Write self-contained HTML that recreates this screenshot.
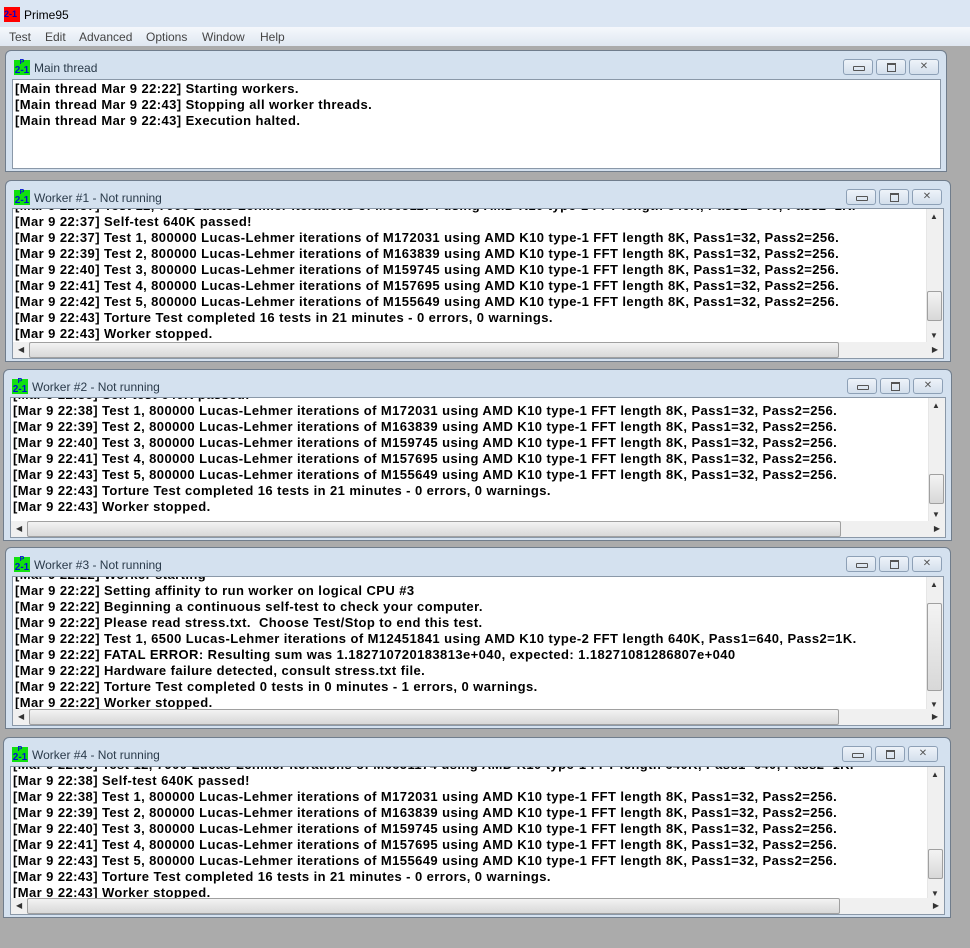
<!DOCTYPE html><html><head><style>
body{margin:0;width:970px;height:948px;background:#ababab;position:relative;overflow:hidden;font-family:"Liberation Sans",sans-serif}
.top{position:absolute;left:0;top:0;width:970px;height:46px;background:#dbe6f3}
.cap{position:absolute;left:24px;top:8px;font-size:12px;color:#000}
.menu{position:absolute;left:0;top:27px;width:970px;height:19px;background:linear-gradient(#f5f8fc,#dfe7f1);font-size:12px;color:#444}
.menu span{position:absolute;top:3px}
.win{position:absolute;background:#d4e1ef;border:1px solid #707d8c;border-radius:6px 6px 0 0;box-sizing:border-box}
.ic{position:absolute;left:8px;top:9px;width:16px;height:15px;background:#10e010;color:#0010d0;font-size:10px;font-weight:bold;line-height:9px;text-align:center}
.ic b{display:block;font-size:7px;line-height:6px}
.tt{position:absolute;left:28px;top:10px;font-size:12px;color:#2a3a4a}
.btn{position:absolute;top:8px;width:30px;height:16px;border:1px solid #8da0b6;border-radius:3px;background:linear-gradient(#eef3f9,#d3dfec);box-sizing:border-box;font-size:10px;color:#555;text-align:center;line-height:13px}
.b1::after{content:"";position:absolute;left:9px;top:6px;width:10px;height:3px;border:1px solid #555;border-radius:1px}
.b2::after{content:"";position:absolute;left:10px;top:3px;width:7px;height:6px;border:1px solid #555;border-top-width:2px}
.cl{position:absolute;background:#fff;border:1px solid #8a98a8;overflow:hidden;box-sizing:border-box}
.tx{position:absolute;left:2px;font-size:13px;letter-spacing:0.42px;font-weight:bold;line-height:16px;white-space:pre;color:#000}
.vs{position:absolute;right:0;top:0;width:16px;background:#f0f0f0;border-left:1px solid #e6e6e6;font-size:8px;color:#333;text-align:center}
.hs{position:absolute;left:0;bottom:0;height:16px;background:#f0f0f0;font-size:8px;color:#333}
.th{position:absolute;background:linear-gradient(#f3f3f3,#d8d8d8);border:1px solid #a0a0a0;border-radius:2px;box-sizing:border-box}
.ua{position:absolute;left:3px;top:3px}.da{position:absolute;left:3px;bottom:2px}
.la{position:absolute;left:5px;top:3px}.ra{position:absolute;right:5px;top:3px}
</style></head><body>
<div class="top"><div style="position:absolute;left:4px;top:7px;width:16px;height:15px;background:#f00;color:#00c;font-size:9px;font-weight:bold;line-height:15px">2-1</div><div class="cap">Prime95</div>
<div class="menu"><span style="left:9px">Test</span><span style="left:45px">Edit</span><span style="left:79px">Advanced</span><span style="left:146px">Options</span><span style="left:202px">Window</span><span style="left:260px">Help</span></div></div>

<div class="win" style="left:5px;top:50px;width:942px;height:122px">
<div class="ic"><b>P</b>2-1</div><div class="tt">Main thread</div>
<div class="btn b1" style="left:837px"></div><div class="btn b2" style="left:870px"></div><div class="btn" style="left:903px">✕</div>
<div class="cl" style="left:6px;top:28px;width:929px;height:90px"><div class="tx" style="top:1px">[Main thread Mar 9 22:22] Starting workers.
[Main thread Mar 9 22:43] Stopping all worker threads.
[Main thread Mar 9 22:43] Execution halted.</div></div></div>

<div class="win" style="left:5px;top:180px;width:946px;height:182px">
<div class="ic"><b>P</b>2-1</div><div class="tt">Worker #1 - Not running</div>
<div class="btn b1" style="left:840px"></div><div class="btn b2" style="left:873px"></div><div class="btn" style="left:906px">✕</div>
<div class="cl" style="left:6px;top:27px;width:932px;height:151px">
<div class="tx" style="top:-11px">[Mar 9 22:37] Test 12, 7900 Lucas-Lehmer iterations of M6651174 using AMD K10 type-1 FFT length 640K, Pass1=640, Pass2=1K.
[Mar 9 22:37] Self-test 640K passed!
[Mar 9 22:37] Test 1, 800000 Lucas-Lehmer iterations of M172031 using AMD K10 type-1 FFT length 8K, Pass1=32, Pass2=256.
[Mar 9 22:39] Test 2, 800000 Lucas-Lehmer iterations of M163839 using AMD K10 type-1 FFT length 8K, Pass1=32, Pass2=256.
[Mar 9 22:40] Test 3, 800000 Lucas-Lehmer iterations of M159745 using AMD K10 type-1 FFT length 8K, Pass1=32, Pass2=256.
[Mar 9 22:41] Test 4, 800000 Lucas-Lehmer iterations of M157695 using AMD K10 type-1 FFT length 8K, Pass1=32, Pass2=256.
[Mar 9 22:42] Test 5, 800000 Lucas-Lehmer iterations of M155649 using AMD K10 type-1 FFT length 8K, Pass1=32, Pass2=256.
[Mar 9 22:43] Torture Test completed 16 tests in 21 minutes - 0 errors, 0 warnings.
[Mar 9 22:43] Worker stopped.</div>
<div class="vs" style="height:133px"><span class="ua">▲</span><div class="th" style="left:0;top:82px;width:15px;height:30px"></div><span class="da">▼</span></div>
<div class="hs" style="width:930px"><span class="la">◀</span><div class="th" style="left:16px;top:0;width:810px;height:16px"></div><span class="ra">▶</span></div></div></div>

<div class="win" style="left:3px;top:369px;width:949px;height:172px">
<div class="ic"><b>P</b>2-1</div><div class="tt">Worker #2 - Not running</div>
<div class="btn b1" style="left:843px"></div><div class="btn b2" style="left:876px"></div><div class="btn" style="left:909px">✕</div>
<div class="cl" style="left:6px;top:27px;width:936px;height:141px">
<div class="tx" style="top:-11px">[Mar 9 22:38] Self-test 640K passed!
[Mar 9 22:38] Test 1, 800000 Lucas-Lehmer iterations of M172031 using AMD K10 type-1 FFT length 8K, Pass1=32, Pass2=256.
[Mar 9 22:39] Test 2, 800000 Lucas-Lehmer iterations of M163839 using AMD K10 type-1 FFT length 8K, Pass1=32, Pass2=256.
[Mar 9 22:40] Test 3, 800000 Lucas-Lehmer iterations of M159745 using AMD K10 type-1 FFT length 8K, Pass1=32, Pass2=256.
[Mar 9 22:41] Test 4, 800000 Lucas-Lehmer iterations of M157695 using AMD K10 type-1 FFT length 8K, Pass1=32, Pass2=256.
[Mar 9 22:43] Test 5, 800000 Lucas-Lehmer iterations of M155649 using AMD K10 type-1 FFT length 8K, Pass1=32, Pass2=256.
[Mar 9 22:43] Torture Test completed 16 tests in 21 minutes - 0 errors, 0 warnings.
[Mar 9 22:43] Worker stopped.</div>
<div class="vs" style="height:123px"><span class="ua">▲</span><div class="th" style="left:0;top:76px;width:15px;height:30px"></div><span class="da">▼</span></div>
<div class="hs" style="width:934px"><span class="la">◀</span><div class="th" style="left:16px;top:0;width:814px;height:16px"></div><span class="ra">▶</span></div></div></div>

<div class="win" style="left:5px;top:547px;width:946px;height:182px">
<div class="ic"><b>P</b>2-1</div><div class="tt">Worker #3 - Not running</div>
<div class="btn b1" style="left:840px"></div><div class="btn b2" style="left:873px"></div><div class="btn" style="left:906px">✕</div>
<div class="cl" style="left:6px;top:28px;width:932px;height:150px">
<div class="tx" style="top:-10px">[Mar 9 22:22] Worker starting
[Mar 9 22:22] Setting affinity to run worker on logical CPU #3
[Mar 9 22:22] Beginning a continuous self-test to check your computer.
[Mar 9 22:22] Please read stress.txt.  Choose Test/Stop to end this test.
[Mar 9 22:22] Test 1, 6500 Lucas-Lehmer iterations of M12451841 using AMD K10 type-2 FFT length 640K, Pass1=640, Pass2=1K.
[Mar 9 22:22] FATAL ERROR: Resulting sum was 1.182710720183813e+040, expected: 1.18271081286807e+040
[Mar 9 22:22] Hardware failure detected, consult stress.txt file.
[Mar 9 22:22] Torture Test completed 0 tests in 0 minutes - 1 errors, 0 warnings.
[Mar 9 22:22] Worker stopped.</div>
<div class="vs" style="height:134px"><span class="ua">▲</span><div class="th" style="left:0;top:26px;width:15px;height:88px"></div><span class="da">▼</span></div>
<div class="hs" style="width:930px"><span class="la">◀</span><div class="th" style="left:16px;top:0;width:810px;height:16px"></div><span class="ra">▶</span></div></div></div>

<div class="win" style="left:3px;top:737px;width:948px;height:181px">
<div class="ic"><b>P</b>2-1</div><div class="tt">Worker #4 - Not running</div>
<div class="btn b1" style="left:838px"></div><div class="btn b2" style="left:871px"></div><div class="btn" style="left:904px">✕</div>
<div class="cl" style="left:6px;top:28px;width:935px;height:149px">
<div class="tx" style="top:-10px">[Mar 9 22:38] Test 12, 7900 Lucas-Lehmer iterations of M6651174 using AMD K10 type-1 FFT length 640K, Pass1=640, Pass2=1K.
[Mar 9 22:38] Self-test 640K passed!
[Mar 9 22:38] Test 1, 800000 Lucas-Lehmer iterations of M172031 using AMD K10 type-1 FFT length 8K, Pass1=32, Pass2=256.
[Mar 9 22:39] Test 2, 800000 Lucas-Lehmer iterations of M163839 using AMD K10 type-1 FFT length 8K, Pass1=32, Pass2=256.
[Mar 9 22:40] Test 3, 800000 Lucas-Lehmer iterations of M159745 using AMD K10 type-1 FFT length 8K, Pass1=32, Pass2=256.
[Mar 9 22:41] Test 4, 800000 Lucas-Lehmer iterations of M157695 using AMD K10 type-1 FFT length 8K, Pass1=32, Pass2=256.
[Mar 9 22:43] Test 5, 800000 Lucas-Lehmer iterations of M155649 using AMD K10 type-1 FFT length 8K, Pass1=32, Pass2=256.
[Mar 9 22:43] Torture Test completed 16 tests in 21 minutes - 0 errors, 0 warnings.
[Mar 9 22:43] Worker stopped.</div>
<div class="vs" style="height:133px"><span class="ua">▲</span><div class="th" style="left:0;top:82px;width:15px;height:30px"></div><span class="da">▼</span></div>
<div class="hs" style="width:933px"><span class="la">◀</span><div class="th" style="left:16px;top:0;width:813px;height:16px"></div><span class="ra">▶</span></div></div></div>
</body></html>
